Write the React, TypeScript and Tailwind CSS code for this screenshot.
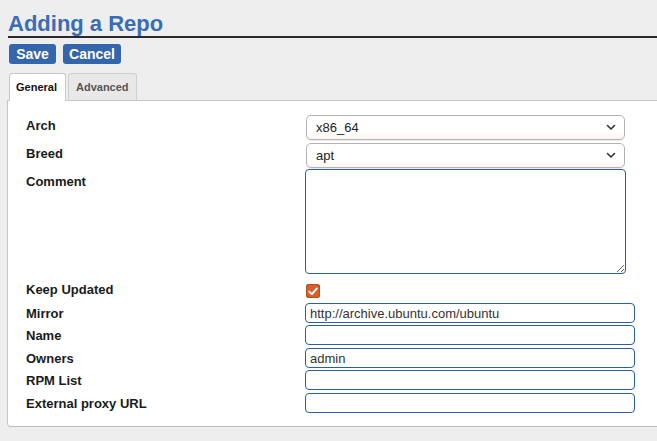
import React from 'react';

const font = { fontFamily: '"Liberation Sans", Arial, sans-serif' };

const Chevron = () => (
  <svg width="10" height="7" viewBox="0 0 10 7" className="shrink-0">
    <path d="M1.5 1.5 L5 5 L8.5 1.5" fill="none" stroke="#333" strokeWidth="1.6" strokeLinecap="round" strokeLinejoin="round" />
  </svg>
);

const FakeSelect = ({ value }: { value: string }) => (
  <div className="flex h-[25px] w-[319px] ml-px items-center justify-between rounded-[5px] border border-[#b4b4b4] bg-[linear-gradient(#ffffff_70%,#fdf4f1)] pl-[9px] pr-[8px] text-[13px] text-[#222] shadow-[0_1px_1px_rgba(0,0,0,0.08)]">
    <span>{value}</span>
    <Chevron />
  </div>
);

const TextInput = ({ value = '' }: { value?: string }) => (
  <input
    type="text"
    defaultValue={value}
    className="h-[20px] w-[330px] rounded-[4px] border border-[#2b5ea6] bg-white px-[4px] text-[13px] text-[#333] outline-none"
    style={font}
  />
);

const Label = ({ children, className = '' }: { children: React.ReactNode; className?: string }) => (
  <div className={`w-[279px] shrink-0 text-[13px] font-bold leading-[15px] text-[#1a1a1a] ${className}`}>{children}</div>
);

export default function App() {
  return (
    <div className="min-h-[441px] bg-[#eeeeee] pl-[8px] pt-px" style={font}>
      <h1 className="mt-[10px] block w-full border-b-2 border-[#2a2a2a] text-[22px] font-bold leading-[25px] text-[#3a6db4]">
        Adding a Repo
      </h1>

      <div className="mt-[6px] flex gap-[7px] pl-px">
        <button type="button" className="h-[20px] w-[47px] rounded-[3px] bg-[#3466ab] text-[14px] font-bold leading-[20px] text-white">
          Save
        </button>
        <button type="button" className="h-[20px] w-[58px] rounded-[3px] bg-[#3466ab] text-[14px] font-bold leading-[20px] text-white">
          Cancel
        </button>
      </div>

      <div className="mt-[9px] flex items-end gap-[2px] pl-px">
        <div className="relative z-10 -mb-px h-[28px] w-[57px] rounded-t-[3px] border border-b-0 border-[#c8c8c8] bg-white pl-[6px] pt-[6px] text-[11px] font-bold leading-[14px] text-[#111]">
          General
        </div>
        <div className="h-[27px] w-[69px] rounded-t-[3px] border border-b-0 border-[#d0d0d0] bg-[#e8e8e8] pl-[7px] pt-[6px] text-[11px] font-bold leading-[14px] text-[#555]">
          Advanced
        </div>
      </div>

      <div className="-ml-px rounded-bl-[4px] border border-r-0 border-[#c6c6c6] border-b-[#bdbdbd] bg-white pb-[13px] pl-[18px] pt-[14px]">
        <div className="flex h-[25px] items-start">
          <Label className="pt-[3px]">Arch</Label>
          <FakeSelect value="x86_64" />
        </div>
        <div className="mt-[3px] flex h-[25px] items-start">
          <Label className="pt-[3px]">Breed</Label>
          <FakeSelect value="apt" />
        </div>
        <div className="mt-px flex items-start">
          <Label className="pt-[5px]">Comment</Label>
          <textarea className="block h-[105px] w-[321px] rounded-[4px] border border-[#2b5ea6] bg-white outline-none" />
        </div>
        <div className="mt-[7px] flex h-[19px] items-start">
          <Label className="pt-[1px]">Keep Updated</Label>
          <span className="ml-px mt-[3px] flex h-[14px] w-[14px] items-center justify-center rounded-[3px] bg-[#d5612c] shadow-[inset_0_0_0_1px_#b84e1f]">
            <svg width="10" height="9" viewBox="0 0 10 9">
              <path d="M1.3 4.6 L3.9 7.1 L8.7 1.6" fill="none" stroke="#fff" strokeWidth="1.9" strokeLinecap="round" strokeLinejoin="round" />
            </svg>
          </span>
        </div>
        <div className="mt-[3px] flex h-[20px] items-center">
          <Label>Mirror</Label>
          <TextInput value="http://archive.ubuntu.com/ubuntu" />
        </div>
        <div className="mt-[2px] flex h-[20px] items-center">
          <Label>Name</Label>
          <TextInput />
        </div>
        <div className="mt-[3px] flex h-[20px] items-center">
          <Label>Owners</Label>
          <TextInput value="admin" />
        </div>
        <div className="mt-[2px] flex h-[20px] items-center">
          <Label>RPM List</Label>
          <TextInput />
        </div>
        <div className="mt-[3px] flex h-[20px] items-center">
          <Label>External proxy URL</Label>
          <TextInput />
        </div>
      </div>
    </div>
  );
}
